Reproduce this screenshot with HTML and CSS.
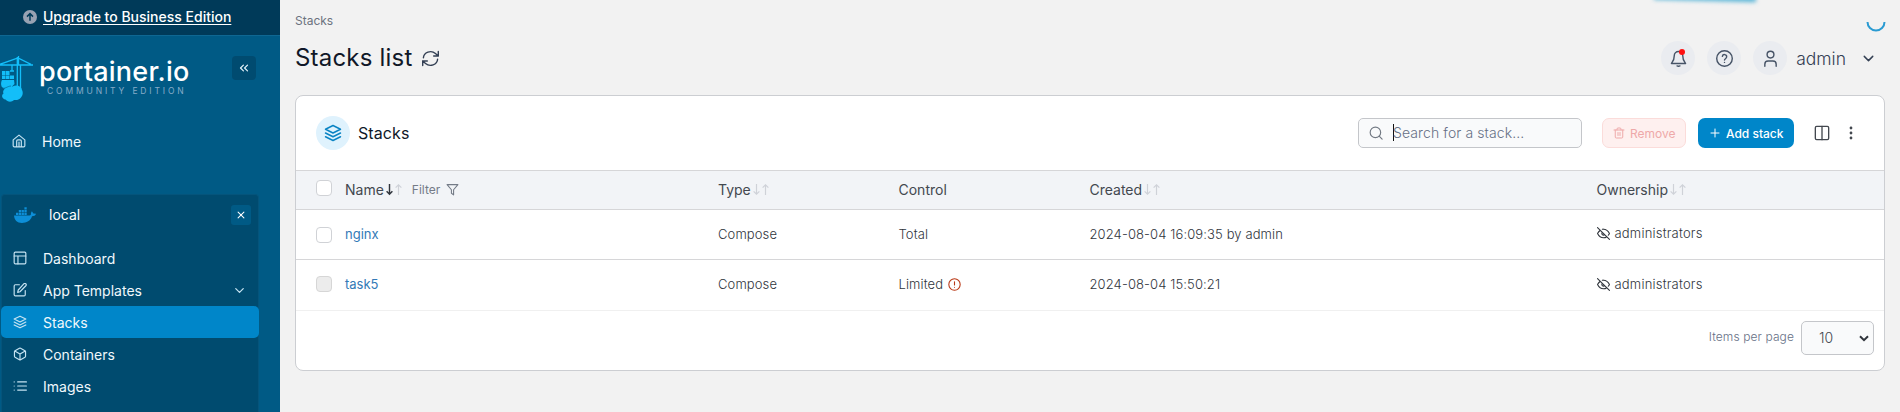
FILE: index.html
```html
<!DOCTYPE html>
<html lang="en">
<head>
<meta charset="utf-8">
<title>Portainer</title>
<link rel="stylesheet" href="styles.css">
</head>
<body>
<svg class="defs" width="0" height="0">
  <symbol id="layers" viewBox="0 0 24 24"><path d="M12 2 2 7l10 5 10-5zM2 12l10 5 10-5M2 17l10 5 10-5"/></symbol>
  <symbol id="down" viewBox="0 0 24 24"><path d="m6 9 6 6 6-6"/></symbol>
  <symbol id="sortdown" viewBox="0 0 10 14"><path d="M5 1v11M1.8 9 5 12.3 8.2 9"/></symbol>
  <symbol id="sortup" viewBox="0 0 10 14"><path d="M5 13V2M1.8 5 5 1.7 8.2 5"/></symbol>
  <symbol id="eyeoff" viewBox="0 0 24 24"><path d="M9.9 4.24A9 9 0 0 1 12 4c7 0 11 8 11 8a18.500 18.500 0 0 1-2.160 3.190m-6.720-1.070a3 3 0 1 1-4.240-4.240M17.940 17.940A10 10 0 0 1 12 20c-7 0-11-8-11-8a18.450 18.450 0 0 1 5.060-5.940M1 1l22 22"/></symbol>
</svg>
<div class="app">
  <aside class="sidebar">
    <div class="upgrade">
      <svg class="up" viewBox="0 0 14 14"><circle cx="7" cy="7" r="7"/><path d="M7 10.700V3.800M4 6.600l3-3 3 3"/></svg>
      <a>Upgrade to Business Edition</a>
    </div>
    <div class="brand">
      <svg class="crane" viewBox="0 0 34 48">
        <path class="line" d="M0 9h33M0 8.300l18-6.300L31 8.300M17.300 1v31M20.500 9v24M18.500 0v9M12 9v6M10 15h4"/>
        <path class="fill" d="M6 15h3.500v4H6zM2 15h3.500v4H2zM2 19.500h3.500v3.500H2zM6 19.500h3.500v3.500H6zM10 19.500h4v3.500h-4z"/>
        <path class="fill" d="M2 24h12l.500 4-4 4-7 .500C0 30 1 26 2 24z"/>
        <path class="fill" d="M4.500 33c1-3 5-4 8-2.500 4-2 9-.500 9.500 3.500 1.500 3 .500 6-1 7.500-2 3-5 2.500-7 2.500-3 3-7 1.500-8.500-.500C2 43 1 39 3.500 37.500c-1-1.500 0-3.500 1-4.500z"/>
        <path class="seam" d="M2 31.800c3 1.500 5-1.500 9-1.800"/>
      </svg>
      <div class="wordmark"><span class="name">portainer.io</span><span class="edition">COMMUNITY EDITION</span></div>
      <div class="collapse"><svg class="ic i14" viewBox="0 0 24 24"><path d="m11 17-5-5 5-5M18 17l-5-5 5-5"/></svg></div>
    </div>
    <div class="item home"><svg class="ic i14" viewBox="0 0 24 24"><path d="M2 10 12 2l10 8v10a2 2 0 0 1-2 2H4a2 2 0 0 1-2-2zM8 22V12a2 2 0 0 1 2-2h4a2 2 0 0 1 2 2v10M12 14v8"/></svg><span>Home</span></div>
    <div class="env">
      <div class="envhead">
        <svg class="whale" viewBox="0 0 22 16"><path d="M0 8.500h15.500c1 0 1.700-.8 1.400-2.500l1-1.700 1.500 2.200 2.600.3c-.6 1.800-2 2.500-4 2.500C16.500 14 12.500 16 8 16 3 16 .3 13 0 8.500zM2 5.700h2.300V8H2zM4.800 5.700h2.300V8H4.800zM7.600 5.700h2.300V8H7.600zM10.400 5.700h2.300V8h-2.300zM4.800 3h2.300v2.300H4.800zM7.600 3h2.300v2.300H7.600zM10.400 3h2.300v2.300h-2.300zM10.400.3h2.300v2.300h-2.300z"/></svg>
        <span>local</span>
        <div class="close"><svg class="ic" viewBox="0 0 24 24"><path d="M19 5 5 19M5 5l14 14"/></svg></div>
      </div>
      <div class="item"><svg class="ic i14" viewBox="0 0 24 24"><rect x="2" y="2" width="20" height="20" rx="2"/><path d="M2 8.500h20M8.500 22V8.500"/></svg><span>Dashboard</span></div>
      <div class="item"><svg class="ic i14" viewBox="0 0 24 24"><path d="M11 3H4a2 2 0 0 0-2 2v15a2 2 0 0 0 2 2h15a2 2 0 0 0 2-2v-7M18.500 1.500a2.100 2.100 0 0 1 3.500 3.200L12 15l-4 1 1-4z"/></svg><span>App Templates</span><svg class="ic chev"><use href="#down"/></svg></div>
      <div class="item active"><svg class="ic i14"><use href="#layers"/></svg><span>Stacks</span></div>
      <div class="item"><svg class="ic i14" viewBox="0 0 24 24"><path d="M21.500 16V8a2 2 0 0 0-1-1.700l-7.500-4.200a2 2 0 0 0-2 0L3.500 6.300a2 2 0 0 0-1 1.700v8a2 2 0 0 0 1 1.700l7.500 4.200a2 2 0 0 0 2 0l7.500-4.200a2 2 0 0 0 1-1.700zM3 7l9 5 9-5M12 22V12"/></svg><span>Containers</span></div>
      <div class="item"><svg class="ic i14" viewBox="0 0 24 24"><path d="M8 5h15M8 12h15M8 19h15M2 5h.1M2 12h.1M2 19h.1"/></svg><span>Images</span></div>
    </div>
  </aside>
  <main class="main">
    <div class="streak"></div>
    <svg class="spinner" viewBox="0 0 20 11"><path d="M1.500 0a8.500 8.500 0 0 0 17 0"/></svg>
    <div class="crumb">Stacks</div>
    <header class="top">
      <h1>Stacks list</h1>
      <svg class="ic refresh" viewBox="0 0 24 24"><path d="M2 11a10 9 0 0 1 17-6l4 3.500M23 2v6.500h-6.500M22 13a10 9 0 0 1-17 6l-4-3.500M1 22v-6.500h6.500"/></svg>
      <div class="user">
        <div class="round"><svg class="ic" viewBox="0 0 24 24"><path d="M18 8A6 6 0 0 0 6 8c0 7-3 9-4 11h20c-1-2-4-4-4-11M10 22.500q2 1 4 0"/></svg><i class="dot"></i></div>
        <div class="round"><svg class="ic" viewBox="0 0 24 24"><circle cx="12" cy="12" r="11"/><path d="M9 9a3 3 0 0 1 6 1c0 2-3 2.500-3 4M12 17.500h.01"/></svg></div>
        <div class="round"><svg class="ic" viewBox="0 0 24 24"><circle cx="12" cy="6.500" r="4.800"/><path d="M4 23v-3a4.500 4.500 0 0 1 4.500-4.500h7A4.500 4.500 0 0 1 20 20v3"/></svg></div>
        <span class="admin">admin</span>
        <svg class="ic userchev"><use href="#down"/></svg>
      </div>
    </header>
    <section class="card">
      <div class="bar">
        <div class="badge"><svg class="ic"><use href="#layers"/></svg></div>
        <h2>Stacks</h2>
        <div class="search"><svg class="ic" viewBox="0 0 24 24"><circle cx="11" cy="11" r="9"/><path d="m22.500 22.500-5-5"/></svg><i class="caret"></i><span>Search for a stack...</span></div>
        <div class="btn remove"><svg class="ic" viewBox="0 0 24 24"><path d="M2 6h20M19.500 6v14a2 2 0 0 1-2 2h-11a2 2 0 0 1-2-2V6M8 6V4a2 2 0 0 1 2-2h4a2 2 0 0 1 2 2v2M10 11v6M14 11v6"/></svg><span>Remove</span></div>
        <div class="btn add"><svg class="ic" viewBox="0 0 24 24"><path d="M12 4v16M4 12h16"/></svg><span>Add stack</span></div>
        <svg class="ic cols" viewBox="0 0 24 24"><rect x="2" y="2" width="20" height="20" rx="2"/><path d="M12 2v20"/></svg>
        <svg class="dots" viewBox="0 0 4 14"><circle cx="2" cy="2" r="1.400"/><circle cx="2" cy="7" r="1.400"/><circle cx="2" cy="12" r="1.400"/></svg>
      </div>
      <div class="row head">
        <div><i class="check"></i></div>
        <div class="cell"><span>Name</span><svg class="sort on first"><use href="#sortdown"/></svg><svg class="sort"><use href="#sortup"/></svg><span class="filter">Filter</span><svg class="ic funnel" viewBox="0 0 24 24"><path d="M22 3H2l8 9.500V19l4 3v-9.500z"/></svg></div>
        <div class="cell"><span>Type</span><svg class="sort first"><use href="#sortdown"/></svg><svg class="sort"><use href="#sortup"/></svg></div>
        <div class="cell"><span>Control</span></div>
        <div class="cell"><span>Created</span><svg class="sort first"><use href="#sortdown"/></svg><svg class="sort"><use href="#sortup"/></svg></div>
        <div class="cell"><span>Ownership</span><svg class="sort first"><use href="#sortdown"/></svg><svg class="sort"><use href="#sortup"/></svg></div>
      </div>
      <div class="row">
        <div><i class="check"></i></div>
        <div class="cell"><a>nginx</a></div>
        <div class="cell"><span>Compose</span></div>
        <div class="cell"><span>Total</span></div>
        <div class="cell"><span>2024-08-04 16:09:35 by admin</span></div>
        <div class="cell owner"><svg class="ic"><use href="#eyeoff"/></svg><span>administrators</span></div>
      </div>
      <div class="row last">
        <div><i class="check off"></i></div>
        <div class="cell"><a>task5</a></div>
        <div class="cell"><span>Compose</span></div>
        <div class="cell"><span>Limited</span><svg class="ic warn" viewBox="0 0 24 24"><circle cx="12" cy="12" r="10.500"/><path d="M12 7v6M12 17h.01"/></svg></div>
        <div class="cell"><span>2024-08-04 15:50:21</span></div>
        <div class="cell owner"><svg class="ic"><use href="#eyeoff"/></svg><span>administrators</span></div>
      </div>
      <div class="pager"><span>Items per page</span><div class="select"><span>10</span><svg viewBox="0 0 10 7"><path d="m1 1.200 4 4 4-4"/></svg></div></div>
    </section>
  </main>
</div>
</body>
</html>
```

FILE: styles.css
```css
* { box-sizing: border-box; }
body { margin: 0; background: #f2f2f2; font-family: Inter, "Liberation Sans", sans-serif; font-size: 13px; color: #43484f; }
.defs { position: absolute; }
svg { flex: none; display: block; }
span, a { white-space: nowrap; }
.ic { fill: none; stroke: currentColor; stroke-width: 2; stroke-linecap: round; stroke-linejoin: round; width: 14px; height: 14px; }
.i14 { width: 14px; height: 14px; }
.app { display: flex; width: 1900px; height: 412px; overflow: hidden; }

.sidebar { width: 280px; flex: none; background: #005a85; color: #e6f4fb; display: flex; flex-direction: column; overflow: hidden; }
.upgrade { height: 36px; flex: none; background: #003a59; border-bottom: 1px solid #0f6792; display: flex; align-items: center; padding: 0 0 2px 23px; gap: 6px; font-size: 14px; font-weight: 500; color: #fff; }
.upgrade a { text-decoration: underline; text-underline-offset: 2px; letter-spacing: 0; }
.up { width: 14px; height: 14px; }
.up circle { fill: #98a2b3; }
.up path { fill: none; stroke: #003a59; stroke-width: 1.5; }
.brand { height: 84px; flex: none; display: flex; align-items: flex-start; padding-top: 20px; }
.crane { width: 34px; height: 48px; }
.crane .line { fill: none; stroke: #13bef9; stroke-width: 1.3; }
.crane .fill { fill: #13bef9; }
.crane .seam { fill: none; stroke: #005a85; stroke-width: .6; }
.wordmark { width: 198px; padding-left: 5px; display: flex; flex-direction: column; }
.name { color: #fff; font-size: 27px; line-height: 31px; font-weight: 500; letter-spacing: 0.25px; }
.edition { font-size: 8.500px; line-height: 9px; letter-spacing: 2.850px; color: #86abc8; padding-left: 8px; }
.collapse { width: 24px; height: 24px; border-radius: 4px; background: #004b70; display: flex; align-items: center; justify-content: center; }
.item { height: 32px; flex: none; display: flex; align-items: center; padding-left: 12px; gap: 16px; font-size: 14px; color: #f0f8fc; }
.item .ic { color: #c5e3f2; }
.home { margin: 5px 0 37px; padding-left: 12px; gap: 16px; }
.env { margin-left: 1px; width: 258px; background: #004b6f; height: 230px; flex: none; border-radius: 4px; border: 1px solid #05547b; border-bottom: 0; }
.envhead { height: 47px; display: flex; align-items: flex-start; padding: 10px 7px 0 12px; font-size: 14px; line-height: 20px; color: #fff; }
.whale { width: 22px; height: 16px; margin: 2px 13px 0 0; fill: #0d8fd8; }
.close { margin-left: auto; width: 20px; height: 20px; border-radius: 3px; background: #005a85; display: flex; align-items: center; justify-content: center; }
.close .ic { width: 10px; height: 10px; stroke-width: 2.500; }
.env .item { margin: 0 -1px; }
.item .chev { margin-left: auto; margin-right: 12px; width: 15px; height: 15px; }
.item.active { background: #0086c9; border-radius: 5px; }

.main { position: relative; flex: 1; padding-left: 15px; display: flex; flex-direction: column; }
.streak { position: absolute; left: 1374px; top: -7px; width: 102px; height: 8px; background: #5fb7d8; filter: blur(2px); transform: rotate(1.500deg); }
.spinner { position: absolute; left: 1586px; top: 22px; width: 20px; height: 11px; fill: none; stroke: #2a9bd2; stroke-width: 2; }
.crumb { font-size: 12px; line-height: 16px; padding-top: 13px; color: #6c737f; }
.top { height: 66px; display: flex; align-items: flex-start; padding-top: 12px; }
h1 { margin: 0; font-size: 24px; line-height: 34px; font-weight: 400; letter-spacing: 0.2px; color: #101828; white-space: nowrap; }
.refresh { width: 17px; height: 17px; margin: 9px 0 0 9px; color: #344054; }
.user { margin-left: auto; display: flex; align-items: center; gap: 12px; padding-right: 23px; color: #475467; }
.round { position: relative; width: 34px; height: 34px; border-radius: 50%; background: #eaecf0; display: flex; align-items: center; justify-content: center; }
.round .ic { width: 17px; height: 17px; }
.dot { position: absolute; left: 18px; top: 8px; width: 6px; height: 6px; border-radius: 50%; background: #f11; }
.admin { font-size: 17.500px; font-weight: 300; color: #344054; margin-left: -3px; }
.userchev { width: 17px; height: 17px; margin-left: 2px; color: #344054; }

.card { width: 1590px; height: 276px; background: #fff; border: 1px solid #ccced2; border-radius: 8px; display: flex; flex-direction: column; overflow: hidden; }
.bar { height: 74px; flex: none; display: flex; align-items: center; padding-left: 20px; }
.badge { width: 34px; height: 34px; border-radius: 50%; background: #dff2fd; color: #0b84c4; display: flex; align-items: center; justify-content: center; }
.badge .ic { width: 18px; height: 18px; }
h2 { margin: 0 auto 0 8px; font-size: 16px; font-weight: 400; letter-spacing: 0.1px; color: #101828; }
.search { width: 224px; height: 30px; border: 1px solid #c4c6ca; border-radius: 5px; background: #f9fafb; display: flex; align-items: center; padding: 0 0 1px 10px; font-size: 14px; font-weight: 300; letter-spacing: 0.1px; color: #667085; }
.search .ic { color: #737a84; margin-right: 10px; }
.caret { width: 1px; height: 17px; background: #111; margin-right: -1px; }
.btn { height: 30px; border-radius: 7px; display: flex; align-items: center; font-size: 12px; gap: 5px; padding-left: 10px; }
.btn .ic { width: 12px; height: 12px; }
.remove { width: 84px; margin-left: 20px; background: #fef0ef; border: 1px solid #fbdcda; color: #eea9a9; }
.add { width: 96px; margin-left: 12px; background: #0086c9; color: #fff; font-weight: 500; gap: 5px; padding-left: 11px; }
.cols { width: 16px; height: 16px; margin-left: 20px; color: #43484f; }
.dots { width: 4px; height: 14px; margin: 0 31px 0 19px; fill: #43484f; }
.row { height: 50px; flex: none; display: grid; grid-template-columns: 29px 373px 180.500px 191px 507px 1fr; align-items: center; padding-left: 20px; border-bottom: 1px solid #d6d6d8; }
.cell { display: flex; align-items: center; font-weight: 300; letter-spacing: 0.11px; color: #30353c; margin-top: -1px; }
.head { height: 40px; background: #f2f4f7; border-top: 1px solid #d6d6d8; }
.head .cell { font-size: 14px; font-weight: 400; letter-spacing: 0; color: #43484f; }
.check { display: block; width: 16px; height: 16px; border: 1px solid #d0d2d6; border-radius: 4px; background: #fff; }
.head .check { margin-top: -4px; }
.check.off { background: #ececec; border-color: #d6d6d6; margin-top: -2px; }
.cell a { color: #337ab7; font-weight: 400; letter-spacing: 0; }
.sort { width: 9px; height: 13px; fill: none; stroke: #cfd2d8; stroke-width: 1.300; }
.sort.on { stroke: #30353c; stroke-width: 1.600; }
.first { margin-left: 1px; }
.filter { font-size: 12px; color: #747b87; margin: 0 6px 0 9px; }
.funnel { color: #747b87; width: 13px; height: 13px; }
.owner .ic { width: 13px; height: 13px; margin-right: 5px; }
.owner { margin-top: -3px; letter-spacing: 0.2px; }
.warn { width: 13px; height: 13px; margin-left: 5px; color: #b93815; }
.last { height: 51px; border-bottom-color: #f0f0f0; }
.last .cell { margin-top: -2px; }
.pager { display: flex; justify-content: flex-end; align-items: flex-start; gap: 7px; padding: 10px 10px 0 0; font-size: 12px; font-weight: 300; letter-spacing: 0.1px; color: #667085; line-height: 32px; }
.select { width: 73px; height: 34px; border: 1px solid #c4c6ca; border-radius: 5px; background: #f9fafb; display: flex; align-items: center; justify-content: space-between; padding: 0 4px 0 17px; font-size: 14px; color: #43484f; }
.select svg { width: 10px; height: 7px; fill: none; stroke: #30353c; stroke-width: 2; }
```
